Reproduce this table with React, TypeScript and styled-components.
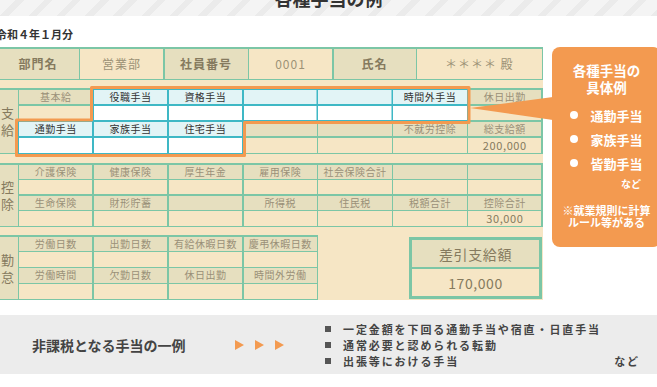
import React from 'react';
import styled, { createGlobalStyle } from 'styled-components';

const TEAL = '#7cc6a6';
const CYAN = '#3fb8c5';
const ORANGE = '#f39a50';
const BEIGE = '#f6e6c5';
const DARK = '#e6dfbf';
const BROWN = '#857a5e';

const GlobalStyle = createGlobalStyle`
  html, body {
    margin: 0;
    padding: 0;
    background: #fff;
  }
  body {
    width: 657px;
    height: 387px;
    overflow: hidden;
    font-family: 'Noto Sans CJK JP', 'Noto Sans', sans-serif;
  }
`;

const Page = styled.div`
  margin-left: -4px;
  width: 665px;
`;

const TitleBar = styled.div`
  height: 16px;
  display: flex;
  justify-content: center;
  background: repeating-linear-gradient(135deg, #f4f4f4 0 14px, #ebebeb 14px 20px);
`;

const Title = styled.h1`
  margin: -11px 0 0;
  font-size: 18px;
  line-height: 18px;
  font-weight: 700;
  color: #333;
`;

const MonthRow = styled.div`
  height: 31px;
  box-sizing: border-box;
  padding-top: 4px;
  display: flex;
  align-items: center;
  font-size: 11px;
  font-weight: 700;
  color: #333;
`;

const Main = styled.div`
  display: flex;
  align-items: flex-start;
  height: 253px;
`;

const Table = styled.div`
  width: 547px;
  height: 253px;
  background: ${BEIGE};
  display: flex;
  flex-direction: column;
`;

const HeaderGrid = styled.div`
  display: grid;
  grid-template-columns: 81px 83px 83px 83px 82px 1fr;
  height: 33px;
  gap: 1.5px;
  padding: 1.5px;
  box-sizing: border-box;
  background: ${TEAL};
`;

const HeadCell = styled.div<{ $dark?: boolean }>`
  display: flex;
  align-items: center;
  justify-content: center;
  background: ${(p) => (p.$dark ? DARK : BEIGE)};
  color: ${(p) => (p.$dark ? BROWN : '#9c9276')};
  font-size: 12px;
  font-weight: ${(p) => (p.$dark ? 700 : 400)};
  letter-spacing: 1px;
`;

const SectionWrap = styled.div<{ $top: number }>`
  position: relative;
  margin-top: ${(p) => p.$top}px;
  display: flex;
  align-items: flex-start;
`;

const SectionGrid = styled.div<{ $cols: number; $h: number }>`
  display: grid;
  grid-template-columns: 20px repeat(${(p) => p.$cols}, 1fr);
  grid-template-rows: repeat(4, 1fr);
  width: ${(p) => 23 + p.$cols * 74.86}px;
  height: ${(p) => p.$h}px;
  gap: 1.5px;
  padding: 1.5px;
  box-sizing: border-box;
  background: ${TEAL};
`;

const Side = styled.div`
  grid-row: 1 / span 4;
  display: flex;
  flex-direction: column;
  align-items: center;
  justify-content: center;
  background: ${DARK};
  color: ${BROWN};
  font-size: 13px;
  line-height: 17px;
`;

type Kind = 'L' | 'V' | 'CL' | 'CV';

const cellBg: Record<Kind, string> = {
  L: DARK,
  V: BEIGE,
  CL: '#e2f4f6',
  CV: '#fff',
};

const Cell = styled.div<{ $kind: Kind }>`
  display: flex;
  align-items: center;
  justify-content: center;
  white-space: nowrap;
  font-size: 10px;
  line-height: 1;
  letter-spacing: 0.5px;
  background: ${(p) => cellBg[p.$kind]};
  color: ${(p) => (p.$kind === 'CL' ? '#333' : '#9a9078')};
  ${(p) =>
    (p.$kind === 'CL' || p.$kind === 'CV') &&
    `position: relative; z-index: 1; box-shadow: 0 0 0 1.5px ${CYAN};`}
`;

const Amount = styled.span`
  font-size: 11px;
  letter-spacing: 0.6px;
  color: ${BROWN};
`;

const Outline = styled.svg`
  position: absolute;
  left: 0;
  top: 0;
  width: 547px;
  height: 70px;
  overflow: visible;
  pointer-events: none;
  z-index: 2;
`;

const NetBox = styled.div`
  width: 133px;
  height: 62px;
  margin: 2px 1px 0 auto;
  border: 3px solid ${TEAL};
  box-sizing: border-box;
  display: grid;
  grid-template-rows: 1fr 1fr;
  gap: 2px;
  background: ${TEAL};
`;

const NetCell = styled.div<{ $dark?: boolean }>`
  display: flex;
  align-items: center;
  justify-content: center;
  background: ${(p) => (p.$dark ? DARK : BEIGE)};
  color: ${BROWN};
  font-size: 14px;
  letter-spacing: 0.6px;
`;

const Callout = styled.div`
  position: relative;
  margin-left: 9px;
  width: 110px;
  height: 200px;
  box-sizing: border-box;
  padding-top: 15px;
  border-radius: 8px;
  background: ${ORANGE};
  color: #fff;
  display: flex;
  flex-direction: column;
  align-items: center;
`;

const Pointer = styled.svg`
  position: absolute;
  left: -83px;
  top: 0;
  width: 84px;
  height: 80px;
`;

const CalloutTitle = styled.div`
  font-size: 13.5px;
  line-height: 17px;
  font-weight: 700;
  text-align: center;
`;

const BulletList = styled.div`
  margin-top: 7px;
  display: flex;
  flex-direction: column;
`;

const Bullet = styled.div`
  display: flex;
  align-items: center;
  gap: 12px;
  height: 24px;
  font-size: 13px;
  font-weight: 700;
  &::before {
    content: '';
    width: 8px;
    height: 8px;
    border-radius: 50%;
    background: #fff;
  }
`;

const Etc = styled.div`
  align-self: flex-end;
  margin: 3px 20px 0 0;
  font-size: 10px;
  line-height: 12px;
  font-weight: 700;
`;

const Note = styled.div`
  margin-top: 14px;
  font-size: 11px;
  line-height: 12px;
  font-weight: 700;
  text-align: center;
`;

const Band = styled.div`
  margin-top: 15px;
  height: 59px;
  padding-left: 36px;
  background: #ececec;
  display: flex;
  align-items: center;
  color: #444;
`;

const BandTitle = styled.div`
  width: 203px;
  font-size: 14px;
  font-weight: 700;
`;

const Arrows = styled.div`
  width: 90px;
  display: flex;
  gap: 11px;
`;

const Arrow = styled.span`
  width: 0;
  height: 0;
  border-left: 9px solid ${ORANGE};
  border-top: 5px solid transparent;
  border-bottom: 5px solid transparent;
`;

const List = styled.div`
  width: 315px;
  display: flex;
  flex-direction: column;
  font-size: 11px;
  line-height: 16px;
  font-weight: 700;
  letter-spacing: 1.9px;
`;

const Item = styled.div`
  display: flex;
  align-items: center;
  gap: 12px;
  &::before {
    content: '';
    width: 6px;
    height: 6px;
    background: #555;
  }
`;

const ItemEtc = styled.span`
  margin-left: auto;
`;

type C = [Kind, string?];

const payRows: C[][] = [
  [['L', '基本給'], ['CL', '役職手当'], ['CL', '資格手当'], ['CL'], ['CL'], ['CL', '時間外手当'], ['L', '休日出勤']],
  [['V'], ['CV'], ['CV'], ['CV'], ['CV'], ['CV'], ['V']],
  [['CL', '通勤手当'], ['CL', '家族手当'], ['CL', '住宅手当'], ['L'], ['L'], ['L', '不就労控除'], ['L', '総支給額']],
  [['CV'], ['CV'], ['CV'], ['V'], ['V'], ['V'], ['V', '200,000']],
];

const deductRows: C[][] = [
  [['L', '介護保険'], ['L', '健康保険'], ['L', '厚生年金'], ['L', '雇用保険'], ['L', '社会保険合計'], ['L'], ['L']],
  [['V'], ['V'], ['V'], ['V'], ['V'], ['V'], ['V']],
  [['L', '生命保険'], ['L', '財形貯蓄'], ['L'], ['L', '所得税'], ['L', '住民税'], ['L', '税額合計'], ['L', '控除合計']],
  [['V'], ['V'], ['V'], ['V'], ['V'], ['V'], ['V', '30,000']],
];

const attendRows: C[][] = [
  [['L', '労働日数'], ['L', '出勤日数'], ['L', '有給休暇日数'], ['L', '慶弔休暇日数']],
  [['V'], ['V'], ['V'], ['V']],
  [['L', '労働時間'], ['L', '欠勤日数'], ['L', '休日出勤'], ['L', '時間外労働']],
  [['V'], ['V'], ['V'], ['V']],
];

function Cells({ rows }: { rows: C[][] }) {
  return (
    <>
      {rows.flat().map(([kind, text], i) => (
        <Cell key={i} $kind={kind}>
          {text && /\d/.test(text) ? <Amount>{text}</Amount> : text}
        </Cell>
      ))}
    </>
  );
}

export default function App() {
  return (
    <Page>
      <GlobalStyle />
      <TitleBar>
        <Title>各種手当の例</Title>
      </TitleBar>
      <MonthRow>令和４年１月分</MonthRow>

      <Main>
        <Table>
          <HeaderGrid>
            <HeadCell $dark>部門名</HeadCell>
            <HeadCell>営業部</HeadCell>
            <HeadCell $dark>社員番号</HeadCell>
            <HeadCell>0001</HeadCell>
            <HeadCell $dark>氏名</HeadCell>
            <HeadCell>＊＊＊＊ 殿</HeadCell>
          </HeaderGrid>

          {/* 支給 */}
          <SectionWrap $top={8}>
            <SectionGrid $cols={7} $h={66}>
              <Side>
                <span>支</span>
                <span>給</span>
              </Side>
              <Cells rows={payRows} />
            </SectionGrid>
            <Outline viewBox="0 0 547 70">
              <path
                d="M95.5 -0.5 H473 V34.5 H248.5 V67.5 H20.5 V32 H95.5 Z"
                fill="none"
                stroke={ORANGE}
                strokeWidth={3}
                strokeLinejoin="round"
              />
            </Outline>
          </SectionWrap>

          {/* 控除 */}
          <SectionWrap $top={9}>
            <SectionGrid $cols={7} $h={64}>
              <Side>
                <span>控</span>
                <span>除</span>
              </Side>
              <Cells rows={deductRows} />
            </SectionGrid>
          </SectionWrap>

          {/* 勤怠 */}
          <SectionWrap $top={8}>
            <SectionGrid $cols={4} $h={65}>
              <Side>
                <span>勤</span>
                <span>怠</span>
              </Side>
              <Cells rows={attendRows} />
            </SectionGrid>
            <NetBox>
              <NetCell $dark>差引支給額</NetCell>
              <NetCell>170,000</NetCell>
            </NetBox>
          </SectionWrap>
        </Table>

        <Callout>
          <Pointer viewBox="0 0 84 80">
            <polygon points="1,61 84,50 84,73" fill={ORANGE} />
          </Pointer>
          <CalloutTitle>
            各種手当の
            <br />
            具体例
          </CalloutTitle>
          <BulletList>
            <Bullet>通勤手当</Bullet>
            <Bullet>家族手当</Bullet>
            <Bullet>皆勤手当</Bullet>
          </BulletList>
          <Etc>など</Etc>
          <Note>
            ※就業規則に計算
            <br />
            ルール等がある
          </Note>
        </Callout>
      </Main>

      <Band>
        <BandTitle>非課税となる手当の一例</BandTitle>
        <Arrows>
          <Arrow />
          <Arrow />
          <Arrow />
        </Arrows>
        <List>
          <Item>一定金額を下回る通勤手当や宿直・日直手当</Item>
          <Item>通常必要と認められる転勤</Item>
          <Item>
            出張等における手当
            <ItemEtc>など</ItemEtc>
          </Item>
        </List>
      </Band>
    </Page>
  );
}
